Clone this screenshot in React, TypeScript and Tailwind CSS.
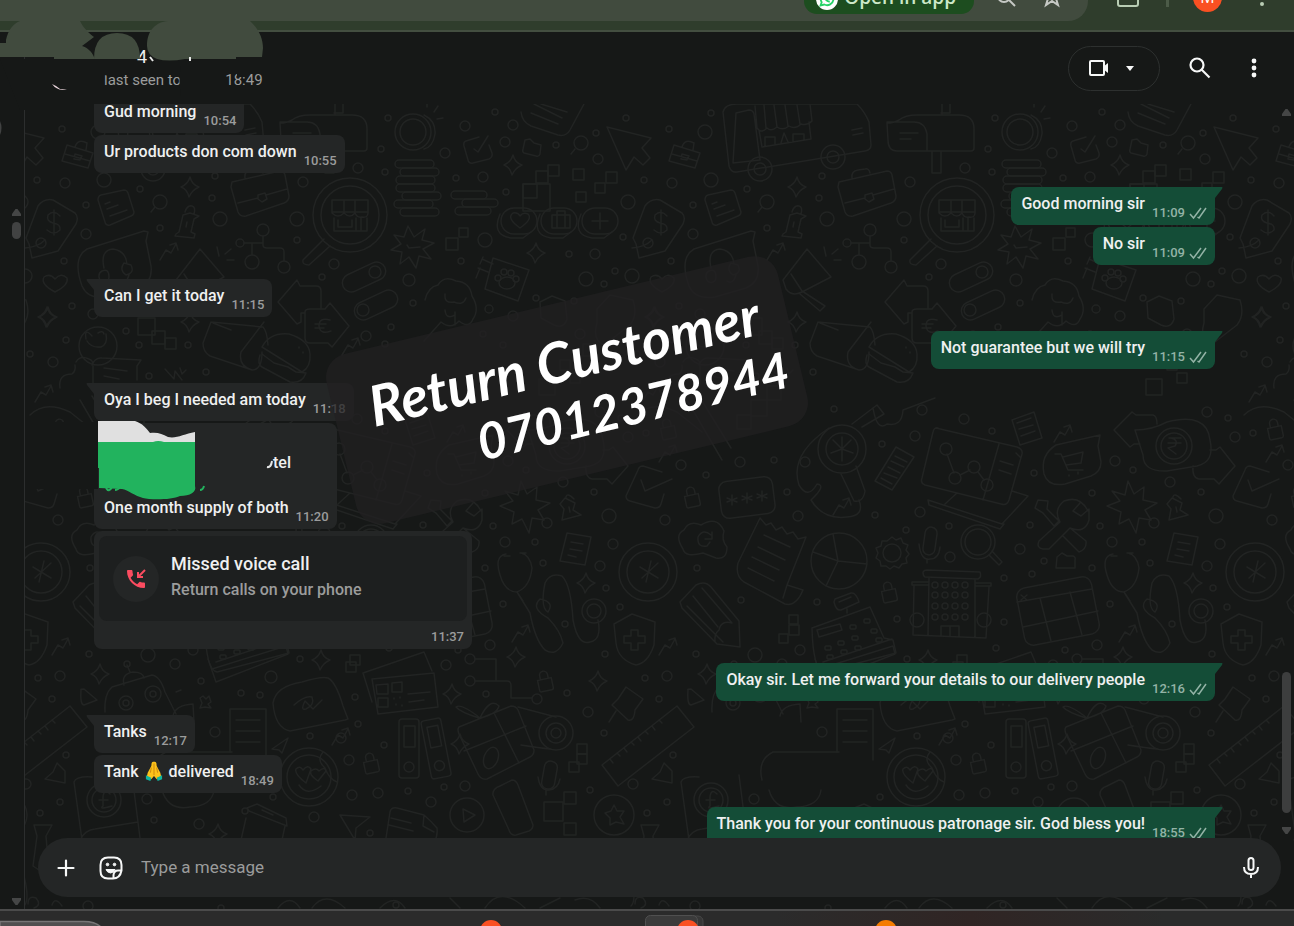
import type { ReactNode } from 'react';

type Side = 'in' | 'out';

interface BubbleProps {
  side: Side;
  time: string;
  first?: boolean;
  children: ReactNode;
}

const TILE_WIDTH = 607;

// x, y, radius
const DOTS = [
  [37, 180, 3], [65, 183, 5], [104, 180, 7], [140, 189, 3], [86, 205, 3], [86, 234, 5], [160, 228, 3], [64, 261, 3],
  [220, 219, 7], [212, 198, 3], [215, 176, 3], [303, 182, 5], [297, 219, 7], [297, 240, 3], [334, 264, 5], [322, 277, 3],
  [358, 168, 5], [385, 172, 3], [72, 306, 3], [93, 314, 5], [126, 331, 3], [139, 345, 3], [66, 340, 3], [53, 362, 5],
  [30, 354, 3], [149, 376, 3], [188, 345, 3], [206, 372, 3], [366, 336, 5], [391, 327, 3], [409, 280, 6], [413, 303, 3],
  [385, 344, 3], [388, 118, 3], [445, 153, 5], [381, 149, 3], [465, 126, 5], [495, 112, 3], [513, 125, 5], [505, 142, 5],
  [556, 145, 3], [598, 159, 5], [596, 133, 3], [626, 118, 3], [62, 129, 3], [98, 132, 7], [104, 113, 3], [456, 178, 3],
  [483, 177, 5], [506, 192, 3], [628, 202, 7], [485, 240, 7], [461, 261, 3], [569, 254, 3], [595, 254, 5], [623, 237, 3],
  [615, 271, 3], [632, 276, 7], [586, 279, 7], [604, 284, 3], [536, 298, 3], [489, 309, 4], [513, 316, 5], [574, 301, 3],
  [580, 334, 5], [483, 334, 3], [503, 345, 3], [385, 431, 3], [39, 433, 3], [508, 461, 5], [526, 470, 3], [427, 473, 3],
  [485, 493, 3], [563, 482, 5], [594, 492, 3], [74, 465, 5], [99, 475, 3], [133, 462, 5], [167, 460, 3], [198, 462, 5],
  [180, 492, 3], [191, 516, 5], [58, 520, 5], [609, 516, 7], [547, 523, 5], [493, 526, 3], [423, 525, 3], [227, 409, 3],
  [315, 410, 5], [357, 419, 5], [308, 436, 5], [275, 444, 3], [600, 412, 5], [621, 418, 3], [628, 437, 5], [268, 515, 3],
  [313, 512, 5], [299, 530, 3], [342, 526, 3], [413, 549, 5], [343, 557, 5], [437, 561, 3], [397, 578, 3], [425, 574, 3],
  [485, 568, 3], [505, 542, 5], [535, 542, 3], [543, 563, 3], [600, 566, 5], [613, 544, 5], [606, 588, 3], [565, 624, 3],
  [620, 607, 3], [503, 604, 3], [210, 602, 3], [134, 600, 3], [90, 568, 3], [290, 619, 3], [397, 622, 3], [193, 650, 5],
  [148, 655, 7], [89, 654, 3], [490, 645, 5], [458, 650, 3], [389, 648, 3], [605, 654, 3], [38, 678, 3], [60, 676, 5],
  [52, 699, 3], [588, 712, 5], [604, 733, 3], [66, 755, 3], [26, 784, 5], [590, 790, 3], [40, 813, 3], [60, 802, 3],
  [310, 736, 3], [341, 738, 5], [358, 724, 3], [384, 745, 3], [349, 760, 5], [352, 795, 5], [378, 793, 5], [408, 791, 3],
  [465, 786, 5], [444, 787, 3], [431, 802, 5], [175, 664, 5], [201, 681, 3], [271, 677, 6], [241, 693, 3], [260, 695, 3],
  [355, 697, 3], [300, 659, 3], [446, 665, 5], [486, 694, 3], [567, 693, 3], [215, 732, 5], [273, 797, 3], [314, 817, 5],
  [245, 811, 3], [199, 824, 5], [147, 799, 5], [154, 820, 3], [370, 833, 3], [88, 906, 5], [221, 908, 3], [396, 905, 3],
];

const SPARKLES = [
  [190, 187], [513, 165], [536, 253], [48, 317], [190, 322], [586, 583], [598, 681], [100, 674], [321, 660], [452, 694],
  [516, 657], [654, 317], [218, 834], [460, 744],
];

const SQUARES = [
  [536, 171, 12], [523, 184, 14], [523, 184, 27], [548, 165, 11], [573, 169, 11], [576, 192, 10], [595, 183, 10],
  [606, 172, 11], [446, 238, 12], [459, 228, 9], [138, 318, 17], [152, 331, 13], [165, 338, 11], [539, 379, 16],
  [560, 360, 10], [570, 373, 10], [583, 344, 12], [182, 625, 10], [182, 615, 9], [172, 634, 9], [350, 655, 10],
  [346, 662, 10], [577, 744, 10], [577, 754, 10], [569, 762, 10], [544, 802, 19], [564, 792, 12], [564, 823, 12],
  [130, 415, 14], [144, 400, 16], [160, 386, 14],
];

const ARROWS = [
  [168, 250], [455, 432], [234, 505], [43, 392], [60, 452], [520, 632], [340, 735], [60, 645], [350, 345],
];

const LOCKS = [
  [85, 498], [282, 593], [61, 430], [371, 764], [545, 682],
];

function Doodles() {
  return (
    <g>
      {DOTS.map(([x, y, r]) => <circle key={x + '-' + y} cx={x} cy={y} r={r} />)}
      {SPARKLES.map(([x, y]) => (
        <path key={x + '-' + y} transform={`translate(${x} ${y})`} d="M0-10Q2-2 9 0Q2 3-1 10Q-3 2-9 0Q-2-3 0-10Z" />
      ))}
      {SQUARES.map(([x, y, s]) => <rect key={x + '-' + y + '-' + s} x={x} y={y} width={s} height={s} />)}
      {ARROWS.map(([x, y]) => (
        <path key={x + '-' + y} transform={`translate(${x} ${y})`} d="M-8 10L-2 0L3 3L8-6M2-5L8-7L10 0" />
      ))}
      {LOCKS.map(([x, y]) => (
        <path key={x + '-' + y} transform={`translate(${x} ${y}) rotate(-12)`} d="M-7-3H7V7Q7 9 5 9H-5Q-7 9-7 7ZM-4-3V-7A4 4 0 0 1 4-7V-3" />
      ))}

      {/* delivery van */}
      <path d="M116 112Q118 104 130 104L250 104Q258 112 262 122L264 145Q264 150 258 151L130 172Q124 173 122 166ZM129 113L142 110Q146 110 147 114L153 160L126 163ZM148 106L150 128Q154 134 160 128Q164 132 170 127Q176 131 182 126Q188 130 194 124Q200 126 205 121L203 104M157 105L159 128M167 105L170 127M178 105L181 126M190 105L193 124M152 130L155 147L204 139L202 122M158 146V137H168V144M186 142V134H197V140M174 143L177 133L181 142M245 130L255 128M246 135L256 133" />
      <circle cx="153" cy="169" r="12" /><circle cx="153" cy="169" r="6" />
      <circle cx="226" cy="157" r="12" /><circle cx="226" cy="157" r="6" />
      {/* mailbox */}
      <path d="M280 123Q287 123 292 120Q298 115 310 115H352Q367 115 367 129V148Q367 151 364 151H290Q281 151 281 140ZM307 122Q318 122 320 134V151M325 151V173H334V151M280 122H308M293 133H311M293 139H304M335 115V104M343 104V113H334" />
      <circle cx="413" cy="132" r="18" /><circle cx="413" cy="132" r="13" /><path d="M424 115Q436 121 435 134Q433 147 424 149M427 107V104M434 112L438 106M437 119L443 118" />
      <path d="M479 137L466 141Q463 142 464 146L468 160Q469 164 473 163L489 159Q493 157 492 153L489 145M474 149L478 152L488 136" />
      <path d="M525 140L530 139L534 143L541 145L540 154Q539 157 536 156L524 153Q522 152 523 149Z" />
      <circle cx="581" cy="143" r="7" /><path d="M575 149L571 154" />
      <path d="M607 127L651 138L642 148L650 158L643 165L634 157L626 170Z" />
      <path d="M67 145L93 153L88 168L62 161ZM75 147Q78 138 87 143L86 150M65 154L90 161M75 154L82 156L80 160L74 159Z" />
      <path d="M521 112Q522 122 531 126L558 135Q566 137 570 130L584 104M531 113L558 124M534 104L562 118M541 104L567 112" />
      {/* coin stacks */}
      {[[395, 160], [400, 168], [396, 176], [396, 184], [402, 192], [394, 200], [400, 208]].map(([x, y]) => (
        <rect key={y} x={x} y={y} width="39" height="8" rx="4" />
      ))}
      <rect x="451" y="191" width="36" height="8" rx="4" /><rect x="462" y="199" width="36" height="8" rx="4" /><rect x="455" y="207" width="36" height="8" rx="4" />
      {/* shop under a magnifying glass */}
      <circle cx="350" cy="215" r="37" /><circle cx="350" cy="215" r="29" />
      <path d="M324 239L303 260Q302 265 309 265L330 246M332 200H368V213Q368 218 362 217Q357 218 355 213Q350 219 344 213Q338 219 332 213ZM332 212H368M344 200V213M355 200V213M334 218V231H367V218M338 220V227H352V220M356 218V231M361 218V231" />
      <path d="M101 195L124 190Q127 190 128 193L134 212Q134 215 131 216L110 225Q106 226 105 222L98 200Q98 196 101 195ZM105 204L110 202M107 209L118 205M110 216L127 210" />
      <circle cx="160" cy="202" r="7" /><path d="M155 207L151 212" />
      <path d="M183 215L179 232L176 234L175 236L194 238L195 234L191 232L194 219L199 216L190 213ZM185 212Q187 205 192 206Q196 207 194 214M187 222L186 227" />
      <path d="M232 182L280 171Q284 171 285 175L289 196Q289 201 284 203L246 216Q240 217 238 212L231 187ZM238 203L258 198M266 195L287 189M258 195L265 193L267 199L262 202L258 199ZM245 178Q244 171 251 170L258 169Q262 168 263 173" />
      <path d="M26 238L38 206Q44 198 53 200L75 213Q79 217 76 224L58 251L32 258L29 244ZM25 248Q38 247 45 240" /><circle cx="41" cy="243" r="5" />
      <path d="M60 216Q54 209 48 215Q46 221 53 223Q61 224 60 230Q54 236 47 230M54 210V235" />
      {[[519, 221], [559, 221], [600, 221]].map(([x, y]) => (
        <g key={x}><rect x={x - 18} y={y - 13} width="36" height="26" rx="13" /><path d={`M${x - 19} ${y - 7}Q${x - 28} ${y + 14} ${x - 8} ${y + 17}H${x + 4}L${x + 12} ${y + 11}`} /></g>
      ))}
      <path d="M520 228Q506 218 513 213Q518 212 520 216Q523 212 528 214Q533 219 520 228ZM552 215H570V228H552ZM557 215V228M565 215V228M557 214V211H565V214M600 213V229M592 221H608" />
      <path d="M408 226L414 237L425 229L422 240L434 243L423 249L431 259L419 256L416 268L409 257L400 264L402 252L391 250L401 244L394 235L404 237ZM407 245L409 248L420 247" />
      {/* org chart */}
      <circle cx="263" cy="230" r="6" /><circle cx="240" cy="243" r="4" /><circle cx="252" cy="262" r="7" /><circle cx="284" cy="267" r="6" />
      <path d="M244 243H262M263 236V245Q263 248 267 248H280Q284 248 284 252V261M252 243V255" />
      <rect x="341" y="268" width="46" height="18" rx="9" transform="rotate(-25 364 277)" /><circle cx="375" cy="272" r="6" />
      <rect x="353" y="296" width="46" height="18" rx="9" transform="rotate(-25 376 305)" /><circle cx="363" cy="310" r="6" />
      <path d="M55 292Q40 284 44 277Q50 273 55 279Q61 272 67 278Q69 285 55 292Z" />
      <path d="M148 232L146 241L151 266Q153 282 139 288L108 297Q88 300 82 286Q72 258 87 249L144 231ZM104 268Q100 250 113 249Q126 251 127 264M102 271A5 6 0 1 0 109 277Q109 268 102 271ZM124 263Q119 270 126 275Q135 273 131 265ZM129 275Q126 285 120 281" />
      <path d="M176 280L200 249L224 277L195 292Q185 297 179 289ZM184 274L195 291L218 306L213 311L193 294M219 256L217 247M225 254L231 249M227 260L234 260" />
      <path d="M493 258L529 270L518 301L485 289ZM493 264L482 259M488 272L478 268M483 257L480 264M480 268L476 278" /><ellipse cx="507" cy="283" rx="8" ry="6" /><circle cx="498" cy="278" r="3" /><circle cx="504" cy="272" r="3" /><circle cx="511" cy="273" r="3" /><circle cx="516" cy="279" r="3" />
      <path d="M425 300Q428 287 438 285Q444 275 456 281Q470 282 472 296Q480 309 473 319Q469 329 459 321Q451 330 441 322L424 341M445 294Q444 304 454 302Q463 306 466 298M445 310Q446 320 455 315M455 312V325" />
      <path d="M297 280L278 302L297 324L301 322V313H305M297 280L300 286H316Q321 286 321 291V308M305 312Q305 309 310 309H325L330 303L349 326L332 347L328 343H310Q305 343 305 338ZM330 320Q319 317 319 326Q320 335 331 331M315 324H326M315 328H324" />
      <path d="M211 322L263 327Q267 331 268 345M211 322L203 343Q203 352 210 356L252 370Q262 370 262 352M264 322L241 352Q238 366 252 370M213 323L231 330" />
      <path d="M262 347Q270 332 289 334Q309 340 310 354Q311 367 302 372ZM260 355Q257 364 262 367L290 382Q302 384 306 373L296 372L288 367L274 363L262 354M299 347V348M303 352V353" />
      <circle cx="98" cy="346" r="19" /><path d="M86 339Q84 327 92 336M98 333Q103 330 104 334M87 341Q91 348 101 347Q108 344 106 334M76 362Q80 355 89 359Q94 361 92 365M60 388Q58 374 72 374Q76 371 75 365M92 365Q95 357 102 358L141 360L137 366V380M93 366V384M104 368L127 371M104 376L119 379" />
      <path d="M165 369L174 379L175 371L182 380M180 368L182 374L186 370" />
      <path d="M540 302L552 296L565 301L567 319Q564 329 554 325L541 318ZM597 309L610 295L633 300Q638 315 630 325L604 345Q592 340 597 323ZM30 415Q45 400 70 412L95 432M80 400L115 460M92 396L124 448" />
      {/* laptop with chart */}
      <path d="M329 428L410 447Q416 449 415 454L402 500Q400 506 394 504L318 485Q313 483 315 478L326 432Q327 427 331 428ZM392 444L376 500M393 461L406 465M392 470L404 474M409 453L413 457M338 504L350 493M321 500L395 524L421 496L405 491M321 500L322 505L393 529L397 524M340 454L347 473M353 475L363 470M371 472L377 480" />
      <circle cx="339" cy="449" r="6" /><circle cx="348" cy="478" r="6" /><circle cx="367" cy="467" r="6" /><circle cx="380" cy="485" r="6" />
      <circle cx="235" cy="449" r="24" /><circle cx="235" cy="449" r="16" />
      <path d="M235 449L226 440M235 449L244 440M235 449L224 453M235 449L246 453M235 449L235 461M235 449V437M234 474L247 501Q256 503 258 491L249 466M222 428Q182 455 192 485Q201 500 210 484Q220 485 204 500Q216 520 240 517Q258 516 252 500M255 427L277 414L270 405L245 424M266 408Q270 432 280 424Q295 427 296 410L328 398" />
      <path d="M289 447L307 457L285 490L268 481ZM288 456L300 462M284 461L297 467M281 467L293 473M277 473L290 478M274 478L285 484" />
      <path d="M405 420L427 412L435 438L413 445ZM410 423L424 418M412 429L426 425M414 436L428 431" />
      <path d="M493 435L491 446L494 462Q494 472 484 476L458 484Q441 487 437 474Q433 455 449 445ZM448 454L454 454L461 470H476M456 457L476 452L474 463L459 465M462 475V476M471 472V474" />
      <circle cx="567" cy="446" r="18" /><circle cx="567" cy="446" r="13" />
      <path d="M562 438H574M561 443H574M564 438Q572 440 568 446L561 448L569 454M528 430Q545 430 560 422Q600 412 603 440Q608 462 590 466L560 471Q536 472 536 455ZM525 412L507 430L523 447L527 444H533M525 412L529 415H546Q550 416 550 424M603 450H609L613 447L628 466L612 484L607 479H592Q585 478 586 466" />
      <path d="M662 472L643 466Q639 466 638 470L626 496Q626 500 630 501L655 508Q660 508 661 504L664 494M641 480L645 491L672 479" />
      <path d="M431 500L441 501L440 509L452 521L447 526L436 513L428 508ZM481 511Q473 495 457 501Q446 510 453 522L432 541Q429 548 436 549L442 549L463 528Q478 534 482 520L482 509L474 516L466 511L473 503M456 536L472 552Q480 549 479 541L463 528" />
      <path d="M521 481L527 494L537 487L536 500L550 503L538 510L544 520L532 518L529 533L522 519L512 524L514 512L500 506L513 501L505 491L518 495Z" />
      <path d="M565 498L575 503L573 510L581 515L562 520L564 509L560 504ZM566 497Q567 492 574 499M569 507L570 512" />
      <rect x="113" y="479" width="54" height="37" rx="8" transform="rotate(-7 140 498)" />
      <path d="M125 495V505M120 498L130 502M130 498L120 502M140 493V503M135 496L145 500M145 496L135 500M155 491V501M150 494L160 498M160 494L150 498" />
      <path d="M76 549Q67 535 77 530Q82 520 94 525Q110 515 117 531Q114 540 120 547Q120 560 109 558L96 553Q78 558 76 549ZM104 535Q96 528 91 537Q90 548 100 546L103 542M105 532V539H98" />
      <path d="M153 518L131 563Q128 576 137 582L178 604Q189 607 196 590L180 585M153 518L159 525L164 523L169 530L175 527L180 534L186 532L191 539L199 537L180 585L176 598M157 535L183 547M151 547L178 560M145 557L172 570M141 568L167 581" />
      <circle cx="232" cy="561" r="28" /><path d="M226 534L231 561L260 564M231 561L219 586M231 561L206 552" />
      <circle cx="285" cy="553" r="9" />
      <path d="M285 537L289 540L294 538L296 543L301 545L299 550L302 554L299 558L300 563L295 564L292 568L287 566L283 569L279 566L274 566L273 561L269 558L271 553L269 548L274 546L275 541L280 541Z" />
      <rect x="317" y="527" width="12" height="28" rx="6" transform="rotate(8 323 541)" /><path d="M312 544Q314 561 323 559Q332 559 333 547M320 559V563" />
      <circle cx="371" cy="542" r="17" /><circle cx="371" cy="542" r="13" /><path d="M382 555L392 565L395 562L385 551" />
      <path d="M73 602L89 585Q98 580 104 587L132 621L133 647L110 644L75 608ZM80 606L116 642M95 588L125 623Q114 620 112 630Q107 634 108 642M86 596L111 627" />
      <path d="M316 572Q317 570 320 570L373 572Q375 577 371 579L318 577Q316 576 316 572ZM322 578L321 635M368 579L368 637M305 582H322M305 582V585H321M369 583H384V586H369M307 586L306 635L379 638L382 587M334 635V626H352V636M343 626V636" />
      {[328, 338, 348, 358].map((x) => [585, 595, 606, 617].map((y) => <circle key={x + '-' + y} cx={x} cy={y} r="3" />))}
      <circle cx="310" cy="620" r="7" /><circle cx="377" cy="620" r="7" />
      <path d="M228 599L244 593Q249 592 252 602L234 610Q229 611 227 602ZM232 602L244 597M205 628L263 607L277 638L286 640L289 653L217 672Q206 670 205 628ZM210 630L233 624L235 630L212 637ZM240 609V613M216 662L285 639" />
      {[[243, 625], [257, 619], [218, 646], [231, 641], [245, 636], [264, 629], [220, 655], [234, 650], [248, 646], [269, 638]].map(([x, y]) => (
        <rect key={x + '-' + y} x={x} y={y} width="6" height="4" rx="1" />
      ))}
      <rect x="413" y="582" width="76" height="58" rx="9" transform="rotate(-11 451 611)" />
      <path d="M410 602L485 589M416 627L491 611M433 598L444 641M463 592L475 635M414 595L420 600M420 595L414 600" />
      <path d="M450 557L455 553L460 556H466Q469 557 468 560V568H449Z" />
      <path d="M506 554Q494 556 500 575Q505 592 517 592Q530 587 532 568Q530 555 521 553M517 592L530 613Q535 640 545 650Q556 657 563 643Q560 630 548 618Q530 608 540 599Q555 602 548 612Q540 608 545 583Q550 572 562 576Q571 585 573 620Q578 646 590 642Q602 640 598 620M504 556H510M520 553H526M517 592L523 601" />
      <circle cx="594" cy="611" r="12" /><circle cx="594" cy="611" r="7" />
      <path d="M567 533L591 537L585 565L560 561ZM571 542L583 544M570 549L582 551M568 555L576 557" />
      <circle cx="648" cy="572" r="29" /><circle cx="648" cy="572" r="21" /><path d="M651 561L646 582M640 567L658 578M642 578L658 563" />
      <path d="M632 614L655 622L654 645Q648 663 636 665Q618 660 616 643L614 624ZM631 630H638V636H645V643H638V650H631V643H624V636H631Z" />
      {/* robot, chat, qr tickets */}
      <path d="M105 712Q104 694 112 687L152 675Q160 676 165 692L176 714M124 685Q121 674 133 672Q143 672 144 678M130 672L127 665M176 692L181 690M173 716Q175 705 193 704L194 722" /><circle cx="127" cy="664" r="3" /><circle cx="126" cy="703" r="7" /><circle cx="126" cy="703" r="3" /><circle cx="153" cy="694" r="8" /><circle cx="153" cy="694" r="3" />
      <path d="M81 690Q80 689 84 689L97 700L84 705Q80 705 81 690ZM200 698L203 696L206 699L209 696L211 702L208 704L211 708L205 707L200 708L202 703Z" />
      <path d="M348 719L343 706Q336 682 328 678Q322 676 302 682Q276 686 273 703Q275 728 290 731L345 720ZM294 705Q305 695 312 697Q315 705 306 709Q300 711 305 701L313 709L322 700" />
      <path d="M363 673L424 652L432 671M372 679L434 673L438 707L378 714ZM363 673L372 702M376 685L388 684V694H377ZM392 683L402 682V692H392ZM378 698H388V707H378ZM408 694L430 692M409 702L424 700M394 698V699M400 697V698M396 704V705M402 705V706" />
      <circle cx="470" cy="659" r="5" /><circle cx="470" cy="681" r="5" /><circle cx="537" cy="699" r="5" /><path d="M475 659H496V681M475 681H507Q511 681 511 686V698H532" />
      <path d="M208 659L216 682L288 654L286 646M212 669L286 646M230 709H266V760M230 709V752M236 720H260M236 731H260M236 742H260M272 749L288 738L282 753L279 750Z" />
      <rect x="399" y="719" width="20" height="59" rx="3" /><rect x="404" y="726" width="11" height="21" /><circle cx="409" cy="767" r="5" />
      <g transform="rotate(-11 436 748)"><rect x="426" y="719" width="20" height="59" rx="3" /><rect x="431" y="726" width="11" height="21" /><circle cx="436" cy="766" r="5" /></g>
      <path d="M459 727L511 706Q516 706 518 710L534 750Q534 755 530 757L487 779Q481 780 478 774L459 734Q457 729 459 727ZM494 713L519 763M464 751L526 726M479 718Q460 712 456 707Q461 703 480 718Q490 697 499 706Q497 714 480 718" /><ellipse cx="491" cy="758" rx="7" ry="11" transform="rotate(20 491 758)" />
      <circle cx="556" cy="733" r="17" /><circle cx="556" cy="733" r="10" /><circle cx="556" cy="733" r="5" /><path d="M518 707L556 717M521 745Q540 748 550 749" />
      <circle cx="309" cy="777" r="29" /><circle cx="309" cy="777" r="22" />
      <path d="M306 783Q294 774 296 769Q300 765 303 770Q308 764 311 769ZM318 781Q309 775 311 771Q316 767 319 771Q325 766 326 771ZM299 785Q307 797 321 786M323 752Q316 760 325 768Q329 779 337 782" />
      <path d="M618 699L626 687L643 699L635 710Q634 722 628 720L612 705ZM616 711L609 722" />
      <path d="M602 765L677 706L694 727L618 786ZM610 759L613 763M617 753L620 756M624 748L627 752M631 742L634 745M638 737L641 741M645 731L648 734M652 726L655 730M659 720L662 723" />
      <rect x="543" y="761" width="13" height="28" rx="6" transform="rotate(10 549 775)" /><path d="M538 777Q540 791 549 790Q558 789 560 779M546 790V795" />
      <path d="M500 786L512 780Q516 780 518 785L533 825Q533 829 529 831L516 835Q511 836 509 830L493 795Q492 789 500 786Z" />
      <circle cx="467" cy="815" r="17" /><path d="M463 809L475 815L464 822Z" />
      <circle cx="614" cy="815" r="20" /><path d="M614 805L617 811L624 811L620 817L624 824L616 822L610 825L610 818L605 813L611 811Z" />
      <path d="M340 815L370 817L356 828L355 840ZM386 838L390 812Q391 807 397 808L424 815Q432 822 437 828Q438 836 434 842M391 818L411 823M389 825L413 831M424 815L423 826L434 832M241 840L246 818M282 840L285 826M247 808L257 804L286 818L287 826L249 811ZM262 810L273 815" />
      <circle cx="104" cy="800" r="17" /><circle cx="104" cy="800" r="12" /><path d="M110 794Q104 788 103 797V806Q98 810 112 806M99 800H108M74 782Q76 776 92 777M74 782L82 840M132 775L140 838M80 840Q85 830 95 829L138 822M162 790Q168 811 190 807Q212 806 214 790M155 780Q150 760 166 752H232" />
      <path d="M34 825H52L46 836L48 860L42 872L33 866L37 836ZM24 876Q30 900 24 906M65 783L45 779L53 772L57 763L65 771ZM28 904Q28 895 36 898Q42 905 34 908M52 905Q55 896 62 906M278 908Q290 893 300 908M312 908Q325 890 345 908M380 908Q395 893 405 908M450 898L460 908M485 908Q500 885 525 908M560 898L540 908M575 900Q590 894 600 908" />
    </g>
  );
}

function Wallpaper() {
  return (
    <svg className="absolute inset-0 h-full w-full" fill="none" stroke="#222423" strokeWidth="1.5" strokeLinejoin="round" strokeLinecap="round" aria-hidden="true">
      {[-1, 0, 1, 2].map((n) => (
        <g key={n} transform={`translate(${n * TILE_WIDTH - 25} -104)`}>
          <Doodles />
        </g>
      ))}
    </svg>
  );
}

function DoubleCheck() {
  return (
    <svg width="18" height="14" viewBox="0 0 18 14" fill="none" stroke="currentColor" strokeWidth="1.5" aria-hidden="true">
      <path d="M1 8L4.500 12L12 2M8.500 11L10 12L17 2" />
    </svg>
  );
}

function Time({ side, time }: { side: Side; time: string }) {
  return (
    <span className={'flex items-center self-end pb-1 text-[13px] leading-4 font-medium ' + (side === 'out' ? 'gap-1 text-[#93b3a6]' : 'text-[#9b9c9c]')}>
      <time>{time}</time>
      {side === 'out' && <DoubleCheck />}
    </span>
  );
}

function Tail({ side }: { side: Side }) {
  return side === 'in' ? (
    <svg className="absolute top-0 -left-2 text-[#242626]" width="16" height="12" viewBox="0 0 16 12" fill="currentColor" aria-hidden="true">
      <path d="M1 0H16V12H8V11L1 2Q0 0 1 0Z" />
    </svg>
  ) : (
    <svg className="absolute top-0 -right-2 text-[#144d37]" width="16" height="12" viewBox="0 0 16 12" fill="currentColor" aria-hidden="true">
      <path d="M15 0H0V12H8V11L15 2Q16 0 15 0Z" />
    </svg>
  );
}

function Bubble({ side, time, first, children }: BubbleProps) {
  return (
    <li
      className={
        'relative flex h-[38px] shrink-0 gap-[7px] rounded-lg pr-2 pl-[10px] ' +
        (side === 'out' ? 'self-end bg-[#144d37] ' : 'self-start bg-[#242626] ') +
        (first ? 'mt-[14px]' : 'mt-[2px]')
      }
    >
      {first && <Tail side={side} />}
      <span className="pt-[5px] leading-6">{children}</span>
      <Time side={side} time={time} />
    </li>
  );
}

function PrayingHands() {
  return (
    <svg className="mx-[2px] inline-block align-[-4px]" width="18" height="20" viewBox="0 0 20 24" preserveAspectRatio="none" role="img" aria-label="folded hands">
      <path d="M9 1Q7 1 7 6L3 14L2 19L7 22L10 18L13 22L18 19L17 14L13 6Q13 1 11 1Z" fill="#fcc21b" />
      <path d="M10 3V17M7 8L6 14M13 8L14 14" stroke="#c97f0c" strokeWidth="1" />
      <path d="M1 17L7 20L6 24L1 22ZM19 17L13 20L14 24L19 22Z" fill="#12b5a0" />
    </svg>
  );
}

function ContactMessage() {
  return (
    <li className="relative mt-[2px] flex h-[106px] shrink-0 flex-col self-start rounded-lg bg-[#242626] pr-2 pl-[10px]">
      <span className="h-[68px] pt-7 pl-[169px] leading-6">tel</span>
      <span className="flex h-[38px] gap-[7px]">
        <span className="pt-[5px] leading-6">One month supply of both</span>
        <Time side="in" time="11:20" />
      </span>
      {/* painted-over contact card */}
      <svg className="absolute top-0 -left-[70px] overflow-visible" width="313" height="80" viewBox="24 423 313 80" aria-hidden="true">
        <path d="M20 422H98V489H20Z" fill="#161817" />
        <path d="M98 421H135C142 423 147 429 150 433C158 432 162 434 168 437C176 439 184 434 195 432V443H98Z" fill="#e0e0e0" />
        <path d="M98 442H153Q158 440 164 442H195V486C197 492 190 496 180 496C172 500 150 500 143 498C135 496 128 490 122 489L99 488V468H98Z" fill="#22b35e" />
        <path d="M106 488Q109 493 112 487M115 490Q118 490 120 487M200 490Q203 490 204 486" fill="none" stroke="#22b35e" strokeWidth="2" />
        <path d="M267 467Q271 468 272 461" fill="none" stroke="#e4e5e5" strokeWidth="2" />
      </svg>
    </li>
  );
}

function MissedCall() {
  return (
    <li className="mt-[2px] flex h-[118px] w-[378px] shrink-0 flex-col rounded-lg bg-[#242626] p-[5px] pb-0">
      <div className="flex h-[85px] items-center gap-3 rounded-lg bg-[#1d1f1f] px-[14px]">
        <span className="flex size-[46px] items-center justify-center rounded-full bg-[#242626]">
          <svg width="24" height="24" viewBox="0 0 24 24" fill="#fb4c60" aria-hidden="true">
            <path d="M20 15.500c-1.200 0-2.500-.2-3.600-.6-.3-.1-.7 0-1 .2l-2.200 2.200c-2.800-1.400-5.100-3.800-6.600-6.600l2.200-2.200c.3-.3.400-.7.2-1C8.700 6.500 8.500 5.200 8.500 4c0-.5-.5-1-1-1H4c-.5 0-1 .5-1 1 0 9.400 7.600 17 17 17 .5 0 1-.5 1-1v-3.500c0-.5-.5-1-1-1z" />
            <path d="M14 5v5h5" fill="none" stroke="#fb4c60" strokeWidth="2" />
            <path d="M14.500 9.500L21 3" stroke="#fb4c60" strokeWidth="2" />
          </svg>
        </span>
        <div className="-mt-1">
          <p className="text-lg leading-[26px]">Missed voice call</p>
          <p className="leading-[26px] text-[#9b9c9c]">Return calls on your phone</p>
        </div>
      </div>
      <div className="flex flex-1 justify-end pr-[3px]">
        <Time side="in" time="11:37" />
      </div>
    </li>
  );
}

function BrowserBar() {
  return (
    <div className="h-8 shrink-0 overflow-hidden border-b-2 border-[#434e40] bg-[#2f3d2c] font-['Open_Sans',sans-serif]">
      <div className="-mt-[19px] flex h-10 items-center text-[#b9cdb4]">
        <div className="flex h-10 flex-1 items-center justify-end rounded-r-full bg-[#414b3e] pr-6 text-[#c6c9c5]">
          <button type="button" className="flex h-[26px] items-center gap-[6px] rounded-full bg-[#1d4d1f] pr-[18px] pl-3 text-[19px] font-semibold text-[#cce8c8]">
            <svg width="22" height="22" viewBox="0 0 24 24" className="-mt-1" aria-hidden="true">
              <circle cx="12" cy="12" r="12" fill="#fff" />
              <path d="M5 19L6.200 15.500A7 7 0 1 1 9 18Z" fill="none" stroke="#25d366" strokeWidth="2" />
              <path d="M9 9Q10 14 15 15" fill="none" stroke="#25d366" strokeWidth="2" />
            </svg>
            <span className="-mt-2 leading-6">Open in app</span>
          </button>
          <button type="button" aria-label="Zoom" className="ml-[22px]">
            <svg width="22" height="22" viewBox="0 0 22 22" fill="none" stroke="currentColor" strokeWidth="2"><circle cx="8" cy="6" r="6" /><path d="M12 9L19 16" /></svg>
          </button>
          <button type="button" aria-label="Bookmark this tab" className="ml-6">
            <svg width="22" height="22" viewBox="0 0 22 22" fill="none" stroke="currentColor" strokeWidth="2"><path d="M10 -3L12.500 4H19L14 8.500L16 15L10 11L4 15L6 8.500L1 4H7.500Z" /></svg>
          </button>
        </div>
        <button type="button" aria-label="Downloads" className="ml-[29px]">
          <svg width="22" height="22" viewBox="0 0 22 22" fill="none" stroke="currentColor" strokeWidth="2"><rect x="1" y="-2" width="20" height="18" rx="2" /></svg>
        </button>
        <span className="ml-[27px] h-3 w-[3px] bg-[#4c5b48]" />
        <button type="button" aria-label="Profile" className="-mt-2 ml-6 flex size-[29px] items-center justify-center rounded-full bg-[#fa5022] text-base text-white">M</button>
        <button type="button" aria-label="Browser menu" className="mr-[30px] ml-[38px]">
          <svg width="4" height="22" viewBox="0 0 4 22" fill="currentColor"><circle cx="2" cy="2" r="2" /><circle cx="2" cy="8" r="2" /><circle cx="2" cy="14" r="2" /></svg>
        </button>
      </div>
    </div>
  );
}

function ChatHeader() {
  return (
    <header className="relative z-10 flex h-[72px] shrink-0 items-center bg-[#161817] pr-[20px] pl-[79px]">
      <div className="flex-1">
        <h1 className="pl-[33px] text-lg leading-6">4</h1>
        <p className="text-[15px] leading-[22px] text-[#9b9c9c]">last seen today at 18:49</p>
      </div>
      <button type="button" aria-label="Video call" className="flex h-[45px] w-[92px] items-center gap-4 rounded-full border border-[#2d302f] pl-5">
        <svg width="20" height="16" viewBox="0 0 20 16" fill="none" aria-hidden="true">
          <rect x="1" y="1" width="14" height="14" rx="1" stroke="#f7f8f8" strokeWidth="2" />
          <path d="M14 7L19 3V13L14 9Z" fill="#f7f8f8" />
        </svg>
        <svg width="10" height="5" viewBox="0 0 10 5" fill="#f7f8f8" aria-hidden="true"><path d="M1 0H9L5 5Z" /></svg>
      </button>
      <button type="button" aria-label="Search" className="ml-5 flex size-10 items-center justify-center">
        <svg width="22" height="22" viewBox="0 0 22 22" fill="none" stroke="#f7f8f8" strokeWidth="2.200" aria-hidden="true">
          <circle cx="8" cy="8" r="6.500" /><path d="M12.500 12.500L20.500 20.500" />
        </svg>
      </button>
      <button type="button" aria-label="Menu" className="ml-[14px] flex size-10 items-center justify-center">
        <svg width="6" height="20" viewBox="0 0 6 20" fill="#f7f8f8" aria-hidden="true">
          <circle cx="3" cy="3" r="2.400" /><circle cx="3" cy="10" r="2.400" /><circle cx="3" cy="17" r="2.400" />
        </svg>
      </button>
    </header>
  );
}

function Composer() {
  return (
    <footer className="relative px-[13px] pb-3">
      <form className="flex h-[59px] items-center rounded-full bg-[#242626] pr-[18px] pl-[17px]" onSubmit={(e) => e.preventDefault()}>
        <button type="button" aria-label="Attach">
          <svg width="22" height="22" viewBox="0 0 22 22" stroke="#f7f8f8" strokeWidth="2.200" strokeLinecap="round"><path d="M11 3.500V18.500M3.500 11H18.500" /></svg>
        </button>
        <button type="button" aria-label="Stickers" className="ml-[22px]">
          <svg width="24" height="24" viewBox="0 0 24 24" fill="none" stroke="#f7f8f8" strokeWidth="2" strokeLinejoin="round">
            <path d="M9 1.500H15Q22.500 1.500 22.500 9V14.500Q21 22.500 14 22.500H9Q1.500 22.500 1.500 15V9Q1.500 1.500 9 1.500Z" />
            <path d="M14.500 22V19Q15 14.500 19 14.500H22" />
            <path d="M7 13.500H16Q14 17 11.500 17Q8 16.500 7 13.500Z" fill="#f7f8f8" strokeWidth="1" />
            <circle cx="8.500" cy="8.500" r="1.300" fill="#f7f8f8" strokeWidth="1" /><circle cx="15.500" cy="8.500" r="1.300" fill="#f7f8f8" strokeWidth="1" />
          </svg>
        </button>
        <input
          type="text"
          aria-label="Message"
          placeholder="Type a message"
          className="ml-[18px] min-w-0 flex-1 bg-transparent text-[17px] text-white outline-none placeholder:text-[#9b9c9c]"
        />
        <button type="button" aria-label="Voice message">
          <svg width="24" height="24" viewBox="0 0 24 24" fill="none" stroke="#f7f8f8" strokeWidth="2">
            <rect x="9.500" y="2" width="5" height="12" rx="2.500" /><path d="M5 11Q5 18 12 18Q19 18 19 11M12 18V22" />
          </svg>
        </button>
      </form>
    </footer>
  );
}

function ScrollArrow({ down }: { down?: boolean }) {
  return (
    <svg width="9" height="7" viewBox="0 0 9 7" fill="#454646" className={down ? 'rotate-180' : ''} aria-hidden="true">
      <path d="M3.500 0H5.500L9 5V7H0V5Z" />
    </svg>
  );
}

function StickyNote() {
  return (
    <div className="absolute top-[199px] left-[310px] z-10 flex h-[174px] w-[464px] -rotate-[13.5deg] flex-col justify-center rounded-3xl bg-[#222021]/75 pr-3 text-right font-['Lato',cursive] font-bold whitespace-nowrap text-white italic">
      <p className="pr-4 text-[56px] leading-[60px]">Return Customer</p>
      <p className="text-[50px] leading-[60px]">07012378944</p>
    </div>
  );
}

// Paint strokes hiding the contact's name and picture.
function Redactions() {
  return (
    <svg className="absolute top-0 left-0 z-20" width="270" height="140" viewBox="0 0 270 140" aria-hidden="true">
      <path d="M104 64H130V73Q116 78 104 75ZM181 66H223V96H181Q178 80 181 66ZM237 66H243V77H237ZM0 59H60V110H20Z" fill="#161817" />
      <g fill="#414b3e">
        <path d="M0 43H6V40C8 30 14 23 20 21H80C83 28 90 34 94 37L82 46C88 48 92 52 94 57V59H54V57H0Z" />
        <path d="M94 59Q94 33 117 33Q140 33 140 59Z" />
        <path d="M147 46C147 30 156 22 168 21H250C258 28 263 38 263 48L262 57H236V59H185Q168 62 157 59Q147 55 147 46Z" />
      </g>
      <path d="M150 57L153 61M190 57V61" stroke="#e8e9e8" strokeWidth="2" />
      <path d="M52 84Q57 86 60 89H67Q58 92 52 84Z" fill="#ead5dc" />
      <path d="M0 121Q3 128 0 135Z" fill="#414242" />
    </svg>
  );
}

function Taskbar() {
  return (
    <div className="relative h-[17px] shrink-0 overflow-hidden border-t-2 border-[#4b4b4b] bg-linear-to-r from-[#2b2b2b] from-60% via-[#302524] via-75% to-[#2a2b2b] to-90%">
      <svg className="absolute inset-0" width="920" height="15" viewBox="0 911 920 15" aria-hidden="true">
        <path d="M0 921.500H84Q96 921.500 102 928H0Z" fill="#514f50" stroke="#777576" strokeWidth="1.500" />
        <rect x="660" y="916" width="43" height="20" rx="5" fill="#373737" stroke="#484848" />
        <rect x="645.500" y="915.500" width="52" height="20" rx="5" fill="#3b3b3b" stroke="#505050" />
        <circle cx="491" cy="931" r="11" fill="#fa5022" /><circle cx="688" cy="931" r="11" fill="#fa5022" /><circle cx="886" cy="931" r="11" fill="#f57c00" />
      </svg>
    </div>
  );
}

export default function App() {
  return (
    <div className="relative flex h-screen flex-col overflow-hidden bg-[#161817] font-['Roboto',sans-serif] text-base text-[#eff0f0]">
      <BrowserBar />
      <div className="flex min-h-0 flex-1">
        <aside className="flex w-[25px] shrink-0 flex-col items-end gap-[6px] border-r border-[#2c2e2e] pt-[177px] pr-[3px] pb-1">
          <ScrollArrow />
          <span className="h-[17px] w-[9px] rounded-full bg-[#414242]" />
          <span className="mt-auto"><ScrollArrow down /></span>
        </aside>
        <div className="flex min-w-0 flex-1 flex-col">
          <ChatHeader />
          <main className="relative flex min-h-0 flex-1 flex-col">
            <Wallpaper />
            <section className="relative min-h-0 flex-1 overflow-hidden pr-[79px] pl-[69px]">
              <ul className="-mt-[11px] flex flex-col font-medium">
                <Bubble side="in" time="10:54">Gud morning</Bubble>
                <Bubble side="in" time="10:55">Ur products don com down</Bubble>
                <Bubble side="out" time="11:09" first>Good morning sir</Bubble>
                <Bubble side="out" time="11:09">No sir</Bubble>
                <Bubble side="in" time="11:15" first>Can I get it today</Bubble>
                <Bubble side="out" time="11:15" first>Not guarantee but we will try</Bubble>
                <Bubble side="in" time="11:18" first>Oya I beg I needed am today</Bubble>
                <ContactMessage />
                <MissedCall />
                <Bubble side="out" time="12:16" first>Okay sir. Let me forward your details to our delivery people</Bubble>
                <Bubble side="in" time="12:17" first>Tanks</Bubble>
                <Bubble side="in" time="18:49">Tank <PrayingHands /> delivered</Bubble>
                <Bubble side="out" time="18:55" first>Thank you for your continuous patronage sir. God bless you!</Bubble>
              </ul>
              <div className="absolute inset-y-0 right-[3px] flex w-[9px] flex-col items-center justify-between pt-[5px] pb-1">
                <ScrollArrow />
                <span className="mt-auto mb-[14px] h-[141px] w-[9px] rounded-full bg-[#3d3e3e]" />
                <ScrollArrow down />
              </div>
            </section>
            <StickyNote />
            <Composer />
          </main>
        </div>
      </div>
      <Taskbar />
      <Redactions />
    </div>
  );
}
